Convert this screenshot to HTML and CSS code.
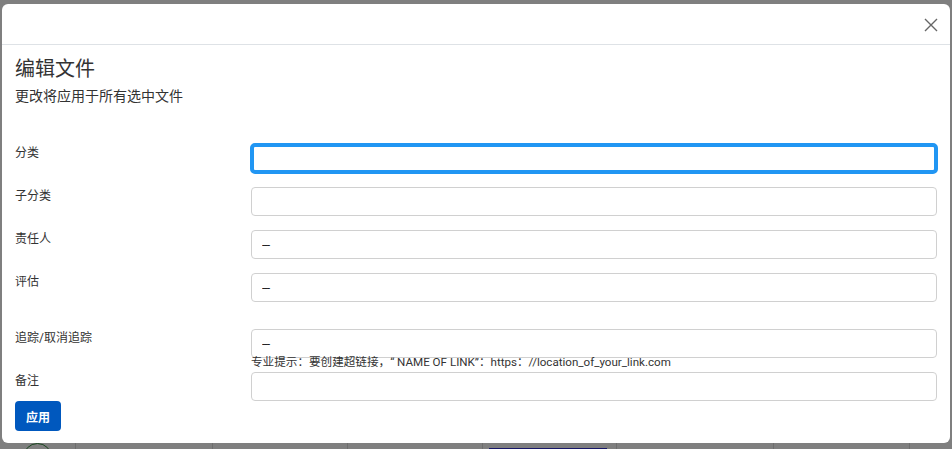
FILE: index.html
```html
<!DOCTYPE html>
<html lang="zh-CN">
<head>
<meta charset="utf-8">
<title>编辑文件</title>
<link rel="stylesheet" href="styles.css">
</head>
<body>
<div class="page">
  <div class="page-row">
    <div class="cell cell-avatar"><span class="avatar"></span></div>
    <div class="cell"></div>
    <div class="cell"></div>
    <div class="cell"></div>
    <div class="cell"><span class="navy-btn"></span></div>
    <div class="cell"></div>
    <div class="cell"></div>
    <div class="cell"></div>
  </div>
</div>
<div class="backdrop"></div>
<div class="modal">
  <div class="modal-header">
    <button class="close" aria-label="关闭">
      <svg width="14" height="14" viewBox="0 0 14 14"><path d="M1 1 L13 13 M13 1 L1 13" stroke="#666" stroke-width="1.4" fill="none"/></svg>
    </button>
  </div>
  <div class="modal-body">
    <h2 class="title">编辑文件</h2>
    <p class="subtitle">更改将应用于所有选中文件</p>
    <form class="form">
      <div class="row">
        <label class="label">分类</label>
        <div class="control"><input class="field is-focused" type="text" value=""></div>
      </div>
      <div class="row">
        <label class="label">子分类</label>
        <div class="control"><input class="field" type="text" value=""></div>
      </div>
      <div class="row">
        <label class="label">责任人</label>
        <div class="control"><input class="field" type="text" value="---"></div>
      </div>
      <div class="row row-wide-gap">
        <label class="label">评估</label>
        <div class="control"><input class="field" type="text" value="---"></div>
      </div>
      <div class="row row-tight">
        <label class="label">追踪/取消追踪</label>
        <div class="control">
          <input class="field" type="text" value="---">
          <div class="hint">专业提示：要创建超链接，“ NAME OF LINK”：https：//location_of_your_link.com</div>
        </div>
      </div>
      <div class="row row-last">
        <label class="label">备注</label>
        <div class="control"><input class="field" type="text" value=""></div>
      </div>
      <button type="button" class="btn-apply">应用</button>
    </form>
  </div>
</div>
</body>
</html>
```

FILE: styles.css
```css
html, body {
  margin: 0;
  padding: 0;
}
body {
  width: 952px;
  height: 449px;
  overflow: hidden;
  background: #fff;
  font-family: Roboto, "Noto Sans CJK SC", sans-serif;
  color: #212529;
}
.page {
  height: 449px;
  padding-top: 443px;
  box-sizing: border-box;
  overflow: hidden;
}
.page-row {
  display: grid;
  grid-template-columns: 75px 137px 135px 135px 134px 157px 136px 43px;
  height: 6px;
  overflow: hidden;
}
.cell {
  border-left: 1px solid #dcdcdc;
}
.cell:first-child {
  border-left: none;
}
.avatar {
  display: block;
  width: 27px;
  height: 27px;
  margin-left: 23px;
  border: 1px solid #2e8b3a;
  border-radius: 50%;
}
.navy-btn {
  display: block;
  margin: 5px 0 0 6px;
  width: 118px;
  height: 20px;
  background: #2a2ad0;
}
.backdrop {
  position: fixed;
  inset: 0;
  background: rgba(0, 0, 0, 0.5);
}
.modal {
  position: fixed;
  left: 2px;
  top: 4px;
  width: 948px;
  height: 439px;
  background: #fff;
  border-radius: 6px;
  overflow: hidden;
}
.modal-header {
  height: 40px;
  border-bottom: 1px solid #dee2e6;
  display: flex;
  justify-content: flex-end;
  align-items: center;
  padding-right: 12px;
}
.close {
  border: none;
  background: none;
  padding: 0;
  width: 14px;
  height: 14px;
  margin-top: 2px;
  display: flex;
}
.modal-body {
  padding: 12px 13px 12px;
}
.title {
  margin: 0;
  font-size: 20px;
  line-height: 24px;
  font-weight: 400;
  color: #333;
}
.subtitle {
  margin: 5px 0 0;
  font-size: 14px;
  line-height: 20px;
  color: #333;
}
.form {
  margin: 38px 0 0;
}
.row {
  display: grid;
  grid-template-columns: 236px 1fr;
  margin-bottom: 14px;
}
.row-wide-gap {
  margin-bottom: 27px;
}
.row-tight {
  margin-bottom: 2px;
}
.row-last {
  margin-bottom: 0;
}
.label {
  font-size: 12px;
  line-height: 18px;
  color: #333;
}
.control {
  display: flex;
  flex-direction: column;
}
.field {
  display: block;
  box-sizing: border-box;
  width: 686px;
  height: 29px;
  border: 1px solid #d0d0d0;
  border-radius: 4px;
  padding: 0 10px;
  font-family: Roboto, "Noto Sans CJK SC", sans-serif;
  font-size: 12px;
  letter-spacing: -1px;
  color: #222;
  background: #fff;
  outline: none;
}
.field.is-focused {
  outline: 4px solid #2196f3;
  outline-offset: -3px;
}
.hint {
  margin-top: -3px;
  font-size: 11.6px;
  line-height: 15px;
  color: #333;
  white-space: nowrap;
}
.btn-apply {
  display: block;
  width: 46px;
  height: 30px;
  border: none;
  border-radius: 4px;
  background: #0058be;
  color: #fff;
  font-family: "Noto Sans CJK SC", sans-serif;
  font-size: 12px;
  font-weight: 700;
  padding: 0;
}
```
